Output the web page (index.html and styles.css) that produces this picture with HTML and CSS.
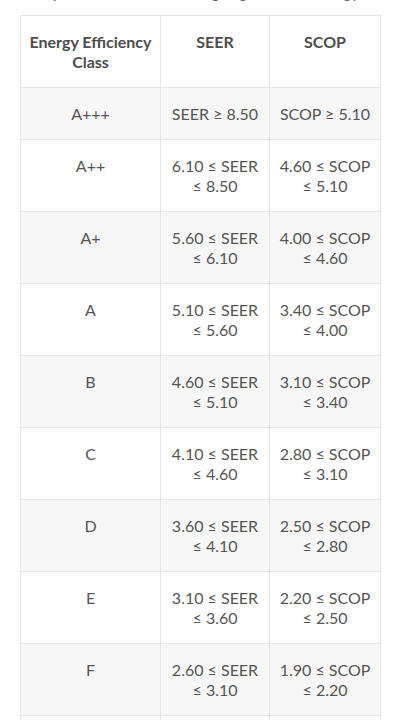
FILE: index.html
```html
<!DOCTYPE html>
<html lang="en">
<head>
<meta charset="utf-8">
<title>Energy efficiency classes</title>
<link rel="stylesheet" href="styles.css">
</head>
<body>
<main class="page">
  <p class="intro">Compare the seasonal ratings against the energy label:</p>
  <table class="rating-table">
    <colgroup>
      <col class="col-class">
      <col class="col-seer">
      <col class="col-scop">
    </colgroup>
    <thead>
      <tr><th>Energy Efficiency Class</th><th>SEER</th><th>SCOP</th></tr>
    </thead>
    <tbody>
      <tr><td>A+++</td><td>SEER ≥ 8.50</td><td>SCOP ≥ 5.10</td></tr>
      <tr><td>A++</td><td>6.10 ≤ SEER ≤ 8.50</td><td>4.60 ≤ SCOP ≤ 5.10</td></tr>
      <tr><td>A+</td><td>5.60 ≤ SEER ≤ 6.10</td><td>4.00 ≤ SCOP ≤ 4.60</td></tr>
      <tr><td>A</td><td>5.10 ≤ SEER ≤ 5.60</td><td>3.40 ≤ SCOP ≤ 4.00</td></tr>
      <tr><td>B</td><td>4.60 ≤ SEER ≤ 5.10</td><td>3.10 ≤ SCOP ≤ 3.40</td></tr>
      <tr><td>C</td><td>4.10 ≤ SEER ≤ 4.60</td><td>2.80 ≤ SCOP ≤ 3.10</td></tr>
      <tr><td>D</td><td>3.60 ≤ SEER ≤ 4.10</td><td>2.50 ≤ SCOP ≤ 2.80</td></tr>
      <tr><td>E</td><td>3.10 ≤ SEER ≤ 3.60</td><td>2.20 ≤ SCOP ≤ 2.50</td></tr>
      <tr><td>F</td><td>2.60 ≤ SEER ≤ 3.10</td><td>1.90 ≤ SCOP ≤ 2.20</td></tr>
      <tr><td>G</td><td>SEER &lt; 2.60</td><td>SCOP &lt; 1.90</td></tr>
    </tbody>
  </table>
</main>
</body>
</html>
```
FILE: styles.css
```css
html, body {
  margin: 0;
  padding: 0;
  background: #ffffff;
}

body {
  font-family: Lato, "Noto Sans", "Open Sans", sans-serif;
  color: #555555;
  font-size: 16px;
  line-height: 20px;
}

.page {
  padding: 0 21px 40px 20px;
}

.intro {
  margin: -18px 0 0;
  height: 33px;
  line-height: 20px;
  color: #666666;
  white-space: nowrap;
  overflow: hidden;
}

.rating-table {
  width: 100%;
  border-collapse: collapse;
  table-layout: fixed;
  border: 1px solid #e3e7eb;
}

.col-class { width: 140px; }
.col-seer { width: 109px; }

.rating-table th,
.rating-table td {
  border: 1px solid #e3e7eb;
  padding: 16px 6px 15px;
  text-align: center;
  vertical-align: top;
}

.rating-table th {
  font-weight: 700;
  color: #4d4d4d;
}

.rating-table tbody tr:nth-child(odd) {
  background: #f7f7f7;
}
```
